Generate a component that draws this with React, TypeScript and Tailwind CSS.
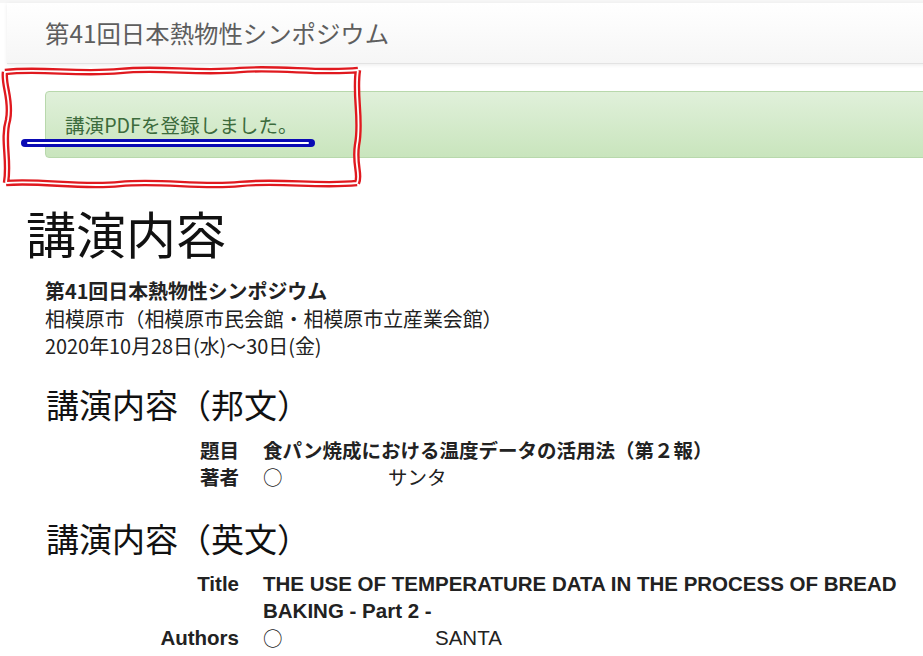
import React from "react";

function Annotations() {
  const redTop = "M5,72 C40,68 80,75 120,71 C160,67 200,74 240,70 C280,67 320,74 358,70";
  const redRight = "M358,70 C354,95 362,120 357,145 C354,165 361,175 357,183";
  const redBottom = "M357,183 C320,187 280,180 240,184 C200,188 160,180 120,184 C80,188 40,180 6,183";
  const redLeft = "M6,183 C10,160 2,140 8,120 C12,100 3,85 5,72";
  const d = [redTop, redRight, redBottom, redLeft].join(" ");
  return (
    <svg
      className="absolute left-0 top-0 pointer-events-none"
      width="923"
      height="656"
      viewBox="0 0 923 656"
    >
      <path d={d} fill="none" stroke="#e0191f" strokeWidth="6.5" strokeLinejoin="round" />
      <path d={d} fill="none" stroke="#ffffff" strokeWidth="1.8" strokeLinejoin="round" />
      <line x1="25" y1="143" x2="311" y2="143" stroke="#0a0ab4" strokeWidth="8" strokeLinecap="round" />
      <line x1="28" y1="143" x2="308" y2="143" stroke="#ffffff" strokeWidth="2" strokeLinecap="round" />
    </svg>
  );
}

export default function App() {
  return (
    <div
      className="relative w-[923px] h-[656px] overflow-hidden bg-white text-[#222]"
      style={{ fontFamily: '"Noto Sans CJK JP", "Noto Sans", sans-serif' }}
    >
      <div className="h-[3px] bg-[#f6f6f6]" />
      <div className="ml-[7px] w-[1000px] h-[61px] bg-gradient-to-b from-[#ffffff] to-[#f6f6f6] border-b border-[#e3e3e3] shadow-[0_1px_4px_rgba(0,0,0,0.08)] flex items-center pl-[38px] text-[24.4px] leading-none text-[#5e5e5e]">
        第41回日本熱物性シンポジウム
      </div>

      <div className="mt-[27px] ml-[45px] w-[1000px] h-[67px] rounded-[4px] border border-[#b8d8ac] bg-gradient-to-b from-[#e0f0da] to-[#c9e5bd] flex items-center pl-[19px] text-[19.6px] leading-none text-[#3c6b3c]">
        講演PDFを登録しました。
      </div>

      <h1 className="mt-[46px] ml-[26px] text-[50px] leading-[56px] font-normal text-[#111]">
        講演内容
      </h1>

      <div className="mt-[17px] ml-[45px] text-[19.9px] leading-[27.5px] text-[#222]">
        <div className="font-bold">第41回日本熱物性シンポジウム</div>
        <div>相模原市（相模原市民会館・相模原市立産業会館）</div>
        <div>2020年10月28日(水)〜30日(金)</div>
      </div>

      <h2 className="mt-[24px] ml-[46px] text-[33px] leading-[40px] font-normal text-[#111]">
        講演内容（邦文）
      </h2>

      <div className="mt-[12px] grid grid-cols-[239px_1fr] gap-x-[24px] text-[19.5px] leading-[27px]">
        <div className="text-right font-bold">題目</div>
        <div className="font-bold">食パン焼成における温度データの活用法（第２報）</div>
        <div className="text-right font-bold">著者</div>
        <div className="flex">
          <span className="w-[125px]">○</span>
          <span>サンタ</span>
        </div>
      </div>

      <h2 className="mt-[28px] ml-[46px] text-[33px] leading-[40px] font-normal text-[#111]">
        講演内容（英文）
      </h2>

      <div
        className="mt-[12px] grid grid-cols-[239px_1fr] gap-x-[24px] text-[20.5px] leading-[27px] pr-[8px]"
        style={{ fontFamily: '"Liberation Sans", Arial, sans-serif' }}
      >
        <div className="text-right font-bold">Title</div>
        <div className="font-bold">THE USE OF TEMPERATURE DATA IN THE PROCESS OF BREAD BAKING - Part 2 -</div>
        <div className="text-right font-bold">Authors</div>
        <div className="flex">
          <span
            className="w-[172px] text-[19.5px]"
            style={{ fontFamily: '"Noto Sans CJK JP", sans-serif' }}
          >
            ○
          </span>
          <span>SANTA</span>
        </div>
      </div>

      <Annotations />
    </div>
  );
}
